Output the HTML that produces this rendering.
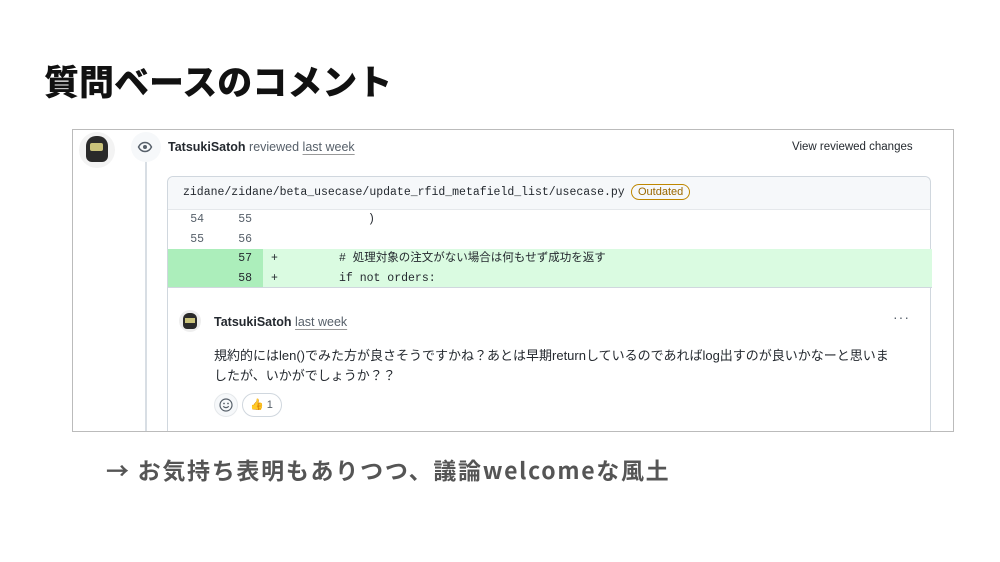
<!DOCTYPE html>
<html><head><meta charset="utf-8"><style>
*{margin:0;padding:0;box-sizing:border-box}
body{width:1000px;height:562px;background:#fff;position:relative;overflow:hidden;font-family:"Liberation Sans","Noto Sans CJK JP",sans-serif}
.abs{position:absolute}
h1{position:absolute;left:44px;top:55px;font-size:35px;font-weight:900;color:#111;font-family:"Noto Sans CJK JP",sans-serif}
.shot{left:72px;top:129px;width:882px;height:303px;border:1px solid #bbb;overflow:hidden}
.mono{font-family:"Liberation Mono","Noto Sans CJK JP",monospace;font-size:11.5px;color:#24292f}
.row{position:absolute;left:0;width:764px;height:19.5px;line-height:19.5px}
.ln{position:absolute;width:30px;text-align:right;color:#57606a}
.ul{text-decoration:underline;text-decoration-color:#999;text-underline-offset:3px}
</style></head><body>
<h1>質問ベースのコメント</h1>
<div class="abs shot">
  <div class="abs" style="left:6px;top:2px;width:36px;height:36px;border-radius:50%;background:#f3f3f3"></div>
  <div class="abs" style="left:13px;top:6px;width:22px;height:26px;border-radius:10px 10px 6px 6px;background:#2a2a2a"></div>
  <div class="abs" style="left:17px;top:13px;width:13px;height:8px;background:#c9c27a;border-radius:2px"></div>
  <div class="abs" style="left:72px;top:30px;width:2px;height:280px;background:#d8dee4"></div>
  <div class="abs" style="left:58px;top:2px;width:30px;height:30px;border-radius:50%;background:#f6f8fa"></div>
  <svg class="abs" style="left:64px;top:9px" width="16" height="16" viewBox="0 0 16 16"><path d="M1.5 8C3 5 5.3 3.5 8 3.5S13 5 14.5 8C13 11 10.7 12.5 8 12.5S3 11 1.5 8Z" fill="none" stroke="#57606a" stroke-width="1.4"/><circle cx="8" cy="8" r="2" fill="#57606a"/></svg>
  <div class="abs" style="left:95px;top:10px;font-size:12.5px;color:#57606a"><b style="color:#24292f">TatsukiSatoh</b> reviewed <span class="ul">last week</span></div>
  <div class="abs" style="left:719px;top:11px;font-size:11.5px;color:#24292f">View reviewed changes</div>
  <div class="abs" style="left:94px;top:46px;width:764px;height:260px;border:1px solid #d0d7de;border-radius:6px 6px 0 0;border-bottom:none">
    <div class="abs" style="left:0;top:0;width:762px;height:33px;background:#f6f8fa;border-bottom:1px solid #e5e8eb;border-radius:6px 6px 0 0"></div>
    <div class="abs mono" style="left:15px;top:9px">zidane/zidane/beta_usecase/update_rfid_metafield_list/usecase.py</div>
    <div class="abs" style="left:463px;top:7px;border:1px solid #bf8700;color:#9a6700;border-radius:10px;font-size:11px;padding:1px 6px">Outdated</div>
    <div class="row mono" style="top:33px"><span class="ln" style="left:6px">54</span><span class="ln" style="left:54px">55</span><span class="abs" style="left:200px">)</span></div>
    <div class="row mono" style="top:52.5px"><span class="ln" style="left:6px">55</span><span class="ln" style="left:54px">56</span></div>
    <div class="row mono" style="top:72px;background:#dafbe1"><span class="abs" style="left:0;width:95px;height:100%;background:#aceebb"></span><span class="ln" style="left:54px;color:#24292f">57</span><span class="abs" style="left:103px">+</span><span class="abs" style="left:171px">#&nbsp;処理対象の注文がない場合は何もせず成功を返す</span></div>
    <div class="row mono" style="top:91.5px;background:#dafbe1;border-bottom:1px solid #d0d7de"><span class="abs" style="left:0;width:95px;height:100%;background:#aceebb"></span><span class="ln" style="left:54px;color:#24292f">58</span><span class="abs" style="left:103px">+</span><span class="abs" style="left:171px">if not orders:</span></div>
    <div class="abs" style="left:11px;top:133px;width:22px;height:22px;border-radius:50%;background:#eee"></div>
    <div class="abs" style="left:15px;top:136px;width:14px;height:16px;border-radius:6px 6px 4px 4px;background:#2a2a2a"></div>
    <div class="abs" style="left:17px;top:141px;width:10px;height:5px;background:#c9c27a"></div>
    <div class="abs" style="left:46px;top:138px;font-size:12.5px;color:#57606a"><b style="color:#24292f">TatsukiSatoh</b> <span class="ul">last week</span></div>
    <div class="abs" style="left:725px;top:132px;font-size:14px;color:#57606a;letter-spacing:1px">···</div>
    <div class="abs" style="left:46px;top:169px;width:698px;font-size:13px;line-height:20px;color:#24292f">規約的にはlen()でみた方が良さそうですかね？あとは早期returnしているのであればlog出すのが良いかなーと思いま<br>したが、いかがでしょうか？？</div>
    <div class="abs" style="left:46px;top:216px;width:24px;height:24px;border-radius:50%;background:#f6f8fa;border:1px solid #e5e8eb"></div>
    <svg class="abs" style="left:51px;top:221px" width="14" height="14" viewBox="0 0 14 14"><circle cx="7" cy="7" r="6" fill="none" stroke="#57606a" stroke-width="1.2"/><circle cx="5" cy="5.5" r=".9" fill="#57606a"/><circle cx="9" cy="5.5" r=".9" fill="#57606a"/><path d="M4.2 8.3Q7 11 9.8 8.3" fill="none" stroke="#57606a" stroke-width="1.2"/></svg>
    <div class="abs" style="left:74px;top:216px;width:40px;height:24px;border-radius:12px;border:1px solid #d0d7de;font-size:11px;line-height:22px;padding-left:7px;color:#57606a"><span style="color:#e8a317">👍</span> 1</div>
  </div>
</div>
<div class="abs" style="left:106px;top:452px;font-size:23px;font-weight:700;color:#555;letter-spacing:1.7px;font-family:'Noto Sans CJK JP',sans-serif">→ お気持ち表明もありつつ、議論welcomeな風土</div>
</body></html>
